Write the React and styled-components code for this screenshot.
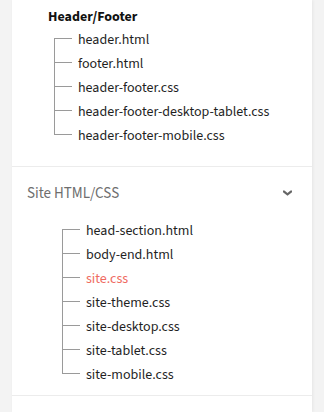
import React from "react";
import styled, { createGlobalStyle } from "styled-components";

const GlobalStyle = createGlobalStyle`
  html, body {
    margin: 0;
    padding: 0;
    background: #f3f3f3;
  }
  body {
    font-family: "Source Sans 3", "Source Sans Pro", "Roboto Condensed", "Lato", sans-serif;
  }
`;

const headerFooterFiles = [
  "header.html",
  "footer.html",
  "header-footer.css",
  "header-footer-desktop-tablet.css",
  "header-footer-mobile.css",
];

const siteFiles = [
  { name: "head-section.html" },
  { name: "body-end.html" },
  { name: "site.css", active: true },
  { name: "site-theme.css" },
  { name: "site-desktop.css" },
  { name: "site-tablet.css" },
  { name: "site-mobile.css" },
];

function Chevron() {
  return (
    <svg width="9" height="6" viewBox="0 0 9 6">
      <path d="M0 0.6 L1.4 0.6 L4.5 3 L7.6 0.6 L9 0.6 L9 2.2 L4.5 5.8 L0 2.2 Z" fill="#666" />
    </svg>
  );
}

function Tree({ items }) {
  return (
    <TreeList>
      {items.map((item, i) => (
        <TreeItem
          key={item.name}
          $first={i === 0}
          $last={i === items.length - 1}
          $active={item.active}
        >
          {item.name}
        </TreeItem>
      ))}
    </TreeList>
  );
}

export default function App() {
  return (
    <>
      <GlobalStyle />
      <Panel>
        <Section>
          <SubGroup>
            <SubTitle>Header/Footer</SubTitle>
            <Tree items={headerFooterFiles.map((name) => ({ name }))} />
          </SubGroup>
        </Section>
        <Section>
          <GroupHeader>
            <GroupTitle>Site HTML/CSS</GroupTitle>
            <Chevron />
          </GroupHeader>
          <GroupBody>
            <Tree items={siteFiles} />
          </GroupBody>
        </Section>
        <Section />
      </Panel>
    </>
  );
}

const Panel = styled.div`
  margin: 0 12px;
  min-height: 100vh;
  background: #fff;
  box-shadow: 1px 0 3px rgba(0, 0, 0, 0.06);
`;

const Section = styled.div`
  border-bottom: 1px solid #ececec;
  &:last-child {
    border-bottom: none;
  }
`;

const SubGroup = styled.div`
  padding: 7px 0 18px 36px;
`;

const SubTitle = styled.div`
  font-size: 14px;
  font-weight: 700;
  line-height: 21px;
  color: #111;
`;

const GroupHeader = styled.div`
  height: 52px;
  padding: 0 20px 0 15px;
  display: flex;
  align-items: center;
  justify-content: space-between;
`;

const GroupTitle = styled.span`
  font-size: 15px;
  color: #6e6e6e;
`;

const GroupBody = styled.div`
  padding: 0 0 8px 44px;
`;

const TreeList = styled.ul`
  list-style: none;
  margin: 0;
  padding: 0 0 0 6px;
`;

const TreeItem = styled.li`
  position: relative;
  height: 24px;
  line-height: 24px;
  padding-left: 24px;
  font-size: 14px;
  color: ${(p) => (p.$active ? "#ef6b5f" : "#1f1f1f")};
  white-space: nowrap;

  &::before {
    content: "";
    position: absolute;
    left: 0;
    top: ${(p) => (p.$first ? "10px" : "0")};
    bottom: ${(p) => (p.$last ? "13px" : "0")};
    border-left: 1px solid #9a9a9a;
  }
  &::after {
    content: "";
    position: absolute;
    left: 0;
    top: 10px;
    width: 18px;
    border-top: 1px solid #9a9a9a;
  }
`;
